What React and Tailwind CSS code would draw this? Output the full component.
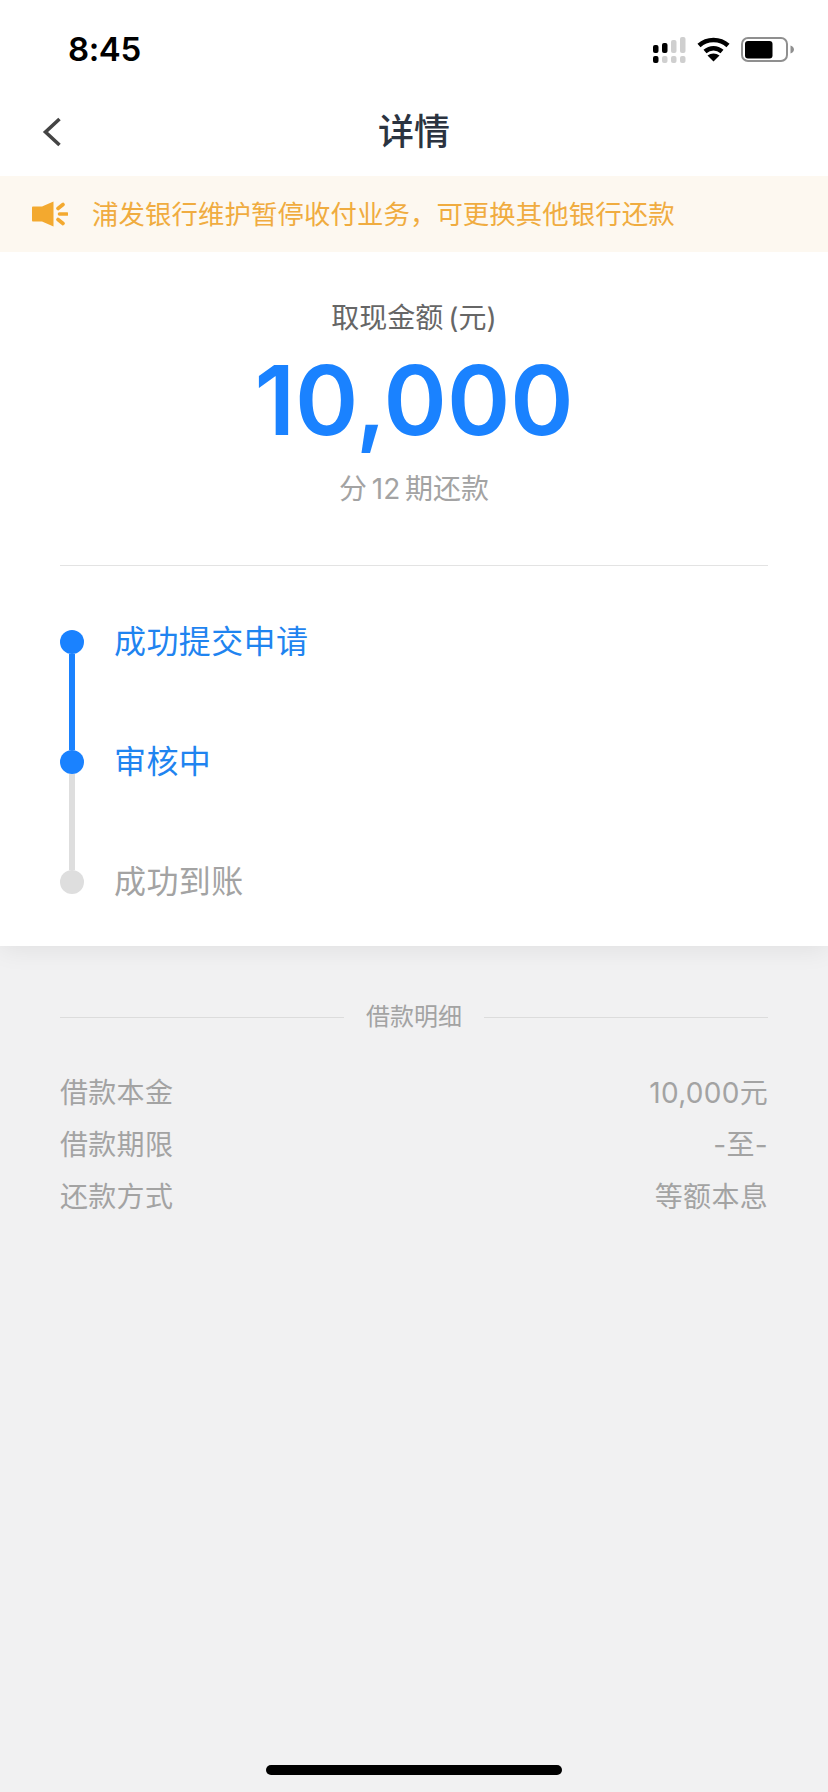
const steps = [
  { label: '成功提交申请', dot: 'bg-[#1a82ff]', text: 'text-[#1f84f0]', line: 'bg-[#1a82ff]' },
  { label: '审核中', dot: 'bg-[#1a82ff]', text: 'text-[#1f84f0]', line: 'bg-[#dedede]' },
  { label: '成功到账', dot: 'bg-[#dedede]', text: 'text-[#a3a3a3]' },
];

const details = [
  ['借款本金', '10,000元'],
  ['借款期限', '-至-'],
  ['还款方式', '等额本息'],
];

function StatusIcons() {
  return (
    <div className="flex items-center">
      <svg width="33" height="26" viewBox="0 0 33 26">
        <rect x="0" y="8" width="5.5" height="8" rx="2" fill="#000" />
        <rect x="9" y="6" width="5.5" height="10" rx="2" fill="#000" />
        <rect x="18" y="3" width="5.5" height="13" rx="2" fill="#cfcfcf" />
        <rect x="27" y="0" width="5.5" height="16" rx="2" fill="#cfcfcf" />
        <rect x="0" y="19" width="5.5" height="7" rx="2" fill="#000" />
        <rect x="9" y="19" width="5.5" height="7" rx="2" fill="#cfcfcf" />
        <rect x="18" y="19" width="5.5" height="7" rx="2" fill="#cfcfcf" />
        <rect x="27" y="19" width="5.5" height="7" rx="2" fill="#cfcfcf" />
      </svg>
      <svg className="ml-[11px]" width="33" height="25" viewBox="0 0 33 25">
        <path d="M2 8.5C10 1 23 1 31 8.5" fill="none" stroke="#000" strokeWidth="4.5" />
        <path d="M8 14.5C13 10 20 10 25 14.5" fill="none" stroke="#000" strokeWidth="4.5" />
        <path d="M16.5 24.5L10.5 18.5C14 15.8 19 15.8 22.5 18.5Z" fill="#000" />
      </svg>
      <svg className="ml-[11px]" width="54" height="26" viewBox="0 0 54 26">
        <rect x="1" y="1" width="45" height="23" rx="6" fill="none" stroke="#8f8f8f" strokeWidth="2" />
        <rect x="4" y="4" width="27.5" height="17.5" rx="3" fill="#000" />
        <path d="M49.5 8.5C52 9.5 53 11 53 12.5C53 14 52 15.5 49.5 16.5Z" fill="#8f8f8f" />
      </svg>
    </div>
  );
}

function Megaphone() {
  return (
    <svg width="36" height="26" viewBox="0 0 36 26" className="shrink-0">
      <path d="M1 5.5H10L21.5 0.5V25.5L10 20.5H1C0.5 20.5 0 20 0 19.5V6.5C0 6 0.5 5.5 1 5.5Z" fill="#f3a92f" />
      <path d="M26 7.5L31 3.5M27.5 13H35M26 18.5L31 22.5" fill="none" stroke="#f3a92f" strokeWidth="3.6" strokeLinecap="round" />
    </svg>
  );
}

export default function App() {
  return (
    <div className="w-[828px] h-[1792px] flex flex-col bg-[#f1f1f2] font-['Inter','Noto_Sans_CJK_SC',sans-serif]">
      <div className="bg-white shadow-[0_4px_24px_rgba(0,0,0,0.07)]">
        <div className="h-[88px] pt-[11px] pl-[68px] pr-[33px] flex items-center justify-between">
          <span className="text-[33px] font-semibold text-black leading-none tracking-[-0.4px]">8:45</span>
          <StatusIcons />
        </div>

        <div className="relative h-[88px] flex items-center justify-center">
          <svg className="absolute left-[42px] top-[29px]" width="20" height="30" viewBox="0 0 20 30">
            <path d="M17.5 2L3.5 15L17.5 28" fill="none" stroke="#444444" strokeWidth="3.6" />
          </svg>
          <h1 className="text-[36px] font-medium text-[#2b3340] leading-none">详情</h1>
        </div>

        <div className="h-[76px] pl-[32px] bg-[#fdf8f0] flex items-center gap-[24px]">
          <Megaphone />
          <p className="text-[26.4px] text-[#f0ac40] leading-none tracking-[0.1px]">浦发银行维护暂停收付业务，可更换其他银行还款</p>
        </div>

        <div className="pt-[48px] flex flex-col items-center">
          <p className="text-[28px] text-[#666666] leading-[36px] [word-spacing:-3px]">取现金额 (元)</p>
          <p className="mt-[16px] text-[96px] font-semibold text-[#1a82ff] leading-[96px]">10,000</p>
          <p className="mt-[23px] text-[28px] text-[#a3a3a3] leading-[36px] [word-spacing:-3px]">分 12 期还款</p>
        </div>

        <div className="mx-[60px] mt-[58px] h-[1px] bg-[#e3e3e3]" />

        <div className="pt-[64px] pb-[52px] pl-[60px] flex flex-col">
          {steps.map((s) => (
            <div key={s.label} className={`flex gap-[30px] ${s.line ? 'h-[120px]' : 'h-[24px]'}`}>
              <div className="relative w-[24px] flex flex-col items-center">
                <div className={`w-[24px] h-[24px] rounded-full shrink-0 ${s.dot}`} />
                {s.line && <div className={`w-[6px] grow ${s.line}`} />}
              </div>
              <span className={`text-[32px] leading-[24px] tracking-[0.4px] ${s.text}`}>{s.label}</span>
            </div>
          ))}
        </div>
      </div>

      <div className="px-[60px] pt-[55px] flex items-center">
        <div className="grow h-[1px] bg-[#dcdcdc]" />
        <span className="mx-[22px] text-[24px] text-[#a3a3a3] leading-[32px]">借款明细</span>
        <div className="grow h-[1px] bg-[#dcdcdc]" />
      </div>

      <div className="mt-[34px] px-[60px] flex flex-col">
        {details.map(([k, v]) => (
          <div key={k} className="h-[52px] flex items-center justify-between text-[28px] text-[#a3a3a3] tracking-[0.3px]">
            <span>{k}</span>
            <span>{v}</span>
          </div>
        ))}
      </div>

      <div className="mt-auto mb-[17px] mx-auto w-[296px] h-[10px] rounded-full bg-black" />
    </div>
  );
}
